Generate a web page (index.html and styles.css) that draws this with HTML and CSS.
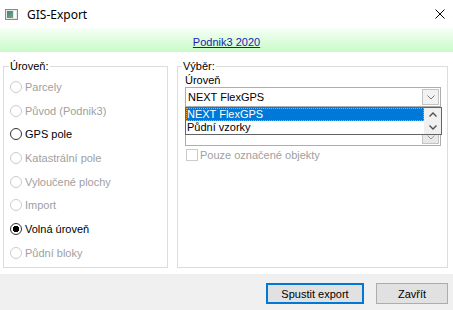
FILE: index.html
```html
<!DOCTYPE html>
<html lang="cs">
<head>
    <meta charset="UTF-8">
    <title>GIS-Export</title>
    <link rel="stylesheet" href="styles.css">
</head>
<body>
    <div class="window">
        <div class="titlebar">
            <svg class="app-icon" width="13" height="11" viewBox="0 0 13 11">
                <defs>
                    <linearGradient id="ig" x1="0" y1="0" x2="1" y2="1">
                        <stop offset="0" stop-color="#3f7f8f"/>
                        <stop offset="1" stop-color="#6fae6a"/>
                    </linearGradient>
                </defs>
                <rect x="0.5" y="0.5" width="12" height="10" fill="#e8e8e8" stroke="#8a8a8a"/>
                <rect x="2" y="2" width="6" height="7" fill="url(#ig)"/>
                <rect x="9" y="2" width="2" height="7" fill="#ffffff"/>
            </svg>
            <span class="title">GIS-Export</span>
            <svg class="close" width="10" height="10" viewBox="0 0 10 10">
                <path d="M0.5 0.5 L9.5 9.5 M9.5 0.5 L0.5 9.5" stroke="#000" stroke-width="1"/>
            </svg>
        </div>

        <div class="banner">
            <a href="#" class="banner-link">Podnik3 2020</a>
        </div>

        <div class="content">
            <fieldset class="group group-left">
                <legend>Úroveň:</legend>
                <label class="radio disabled"><span class="dot"></span>Parcely</label>
                <label class="radio disabled"><span class="dot"></span>Původ (Podnik3)</label>
                <label class="radio"><span class="dot"></span>GPS pole</label>
                <label class="radio disabled"><span class="dot"></span>Katastrální pole</label>
                <label class="radio disabled"><span class="dot"></span>Vyloučené plochy</label>
                <label class="radio disabled"><span class="dot"></span>Import</label>
                <label class="radio"><span class="dot checked"></span>Volná úroveň</label>
                <label class="radio disabled"><span class="dot"></span>Půdní bloky</label>
            </fieldset>

            <fieldset class="group group-right">
                <legend>Výběr:</legend>
                <div class="field-label">Úroveň</div>
                <div class="combo-wrap">
                    <div class="combo">
                        <span class="combo-text">NEXT FlexGPS</span>
                        <span class="combo-btn">
                            <svg width="8" height="5" viewBox="0 0 8 5"><path d="M0.5 0.5 L4 4 L7.5 0.5" fill="none" stroke="#7a7a7a"/></svg>
                        </span>
                    </div>
                    <div class="listbox">
                        <div class="listbox-body"></div>
                        <div class="listbox-scroll">
                            <span class="scroll-down">
                                <svg width="8" height="5" viewBox="0 0 8 5"><path d="M0.5 0.5 L4 4 L7.5 0.5" fill="none" stroke="#9a9a9a"/></svg>
                            </span>
                        </div>
                    </div>
                    <div class="droplist">
                        <div class="items">
                            <div class="item selected">NEXT FlexGPS</div>
                            <div class="item">Půdní vzorky</div>
                        </div>
                        <div class="drop-scroll">
                            <span class="arrow">
                                <svg width="8" height="5" viewBox="0 0 8 5"><path d="M0.5 4.5 L4 1 L7.5 4.5" fill="none" stroke="#505050" stroke-width="1.4"/></svg>
                            </span>
                            <span class="arrow">
                                <svg width="8" height="5" viewBox="0 0 8 5"><path d="M0.5 0.5 L4 4 L7.5 0.5" fill="none" stroke="#505050" stroke-width="1.4"/></svg>
                            </span>
                        </div>
                    </div>
                </div>
                <label class="check disabled"><span class="box"></span>Pouze označené objekty</label>
            </fieldset>
        </div>

        <div class="footer">
            <button class="btn btn-default">Spustit export</button>
            <button class="btn">Zavřít</button>
        </div>
    </div>
</body>
</html>
```

FILE: styles.css
```css
body {
    margin: 0;
    background-color: white;
    font-family: "Liberation Sans", Arial, sans-serif;
    font-size: 11px;
    color: #000;
}
.window {
    width: 453px;
    height: 310px;
    display: flex;
    flex-direction: column;
    overflow: hidden;
}
.titlebar {
    height: 28px;
    display: flex;
    align-items: center;
    padding-left: 5px;
    padding-right: 8px;
    font-family: "Noto Sans", sans-serif;
    font-size: 12px;
}
.app-icon {
    margin-top: 1px;
}
.title {
    margin-left: 9px;
    flex: 1;
}
.close {
    margin-bottom: 1px;
}
.banner {
    height: 24px;
    display: flex;
    align-items: center;
    justify-content: center;
    background: linear-gradient(#f6fff6, #c8fac8);
}
.banner-link {
    color: #1b1bb3;
    text-decoration: underline;
    margin-top: 3px;
}
.content {
    flex: 1;
    display: flex;
    gap: 9px;
    padding: 7px 5px 6px 3px;
}
.group {
    margin: 0;
    min-width: 0;
    border: 1px solid #dcdcdc;
    box-sizing: border-box;
}
.group legend {
    padding: 0 1px;
    line-height: 14px;
}
.group-left {
    width: 165px;
    padding: 2px 4px 0 6px;
    display: flex;
    flex-direction: column;
}
.group-left legend {
    margin-left: -1px;
}
.group-right {
    width: 271px;
    padding: 0 5px 0 7px;
}
.group-right legend {
    margin-left: -3px;
}
.radio {
    height: 23.7px;
    display: flex;
    align-items: center;
}
.radio.disabled,
.check.disabled {
    color: #a0a0a0;
}
.dot {
    width: 12px;
    height: 12px;
    box-sizing: border-box;
    border: 1px solid #333;
    border-radius: 50%;
    margin-right: 3px;
    background: white;
}
.disabled .dot {
    border-color: #cccccc;
}
.dot.checked {
    background: radial-gradient(circle, #000 3px, white 3.5px);
}
.field-label {
    line-height: 14px;
}
.combo-wrap {
    position: relative;
    width: 256px;
}
.combo {
    height: 20px;
    box-sizing: border-box;
    border: 1px solid #adadad;
    background: white;
    display: flex;
    align-items: center;
    padding: 0 1px 0 2px;
}
.combo-text {
    flex: 1;
}
.combo-btn {
    width: 17px;
    height: 16px;
    box-sizing: border-box;
    border: 1px solid #c4c4c4;
    background: #f2f2f2;
    display: flex;
    align-items: center;
    justify-content: center;
}
.listbox {
    height: 39px;
    box-sizing: border-box;
    border: 1px solid #adadad;
    border-top: none;
    display: flex;
    background: white;
}
.listbox-body {
    flex: 1;
}
.listbox-scroll {
    width: 17px;
    display: flex;
    flex-direction: column;
    justify-content: flex-end;
    padding: 0 1px 1px 0;
}
.scroll-down {
    height: 11px;
    border: 1px solid #c4c4c4;
    background: #e8e8e8;
    display: flex;
    align-items: center;
    justify-content: center;
}
.droplist {
    position: absolute;
    top: 20px;
    left: 0;
    width: 257px;
    height: 28px;
    box-sizing: border-box;
    border: 1px solid #646464;
    background: white;
    display: flex;
}
.items {
    flex: 1;
}
.item {
    height: 13px;
    line-height: 13px;
    padding-left: 1px;
    box-sizing: border-box;
}
.item.selected {
    background-color: #0078d7;
    color: white;
    border: 1px dotted #f0a030;
    line-height: 11px;
    padding-left: 0;
}
.drop-scroll {
    width: 17px;
    background: #f0f0f0;
    display: flex;
    flex-direction: column;
}
.arrow {
    flex: 1;
    display: flex;
    align-items: center;
    justify-content: center;
}
.check {
    display: flex;
    align-items: center;
    height: 12px;
    margin-top: 3px;
    margin-left: 1px;
}
.box {
    width: 12px;
    height: 12px;
    box-sizing: border-box;
    border: 1px solid #cccccc;
    margin-right: 2px;
}
.footer {
    height: 36px;
    box-sizing: border-box;
    background-color: #f0f0f0;
    display: flex;
    justify-content: flex-end;
    align-items: flex-start;
    gap: 12px;
    padding: 9px 5px 0 0;
}
.btn {
    height: 21px;
    box-sizing: border-box;
    border: 1px solid #adadad;
    background-color: #e1e1e1;
    font-family: "Liberation Sans", Arial, sans-serif;
    font-size: 11px;
    color: #000;
    padding: 0;
    width: 72px;
}
.btn-default {
    width: 98px;
    border: 2px solid #0078d7;
}
```
